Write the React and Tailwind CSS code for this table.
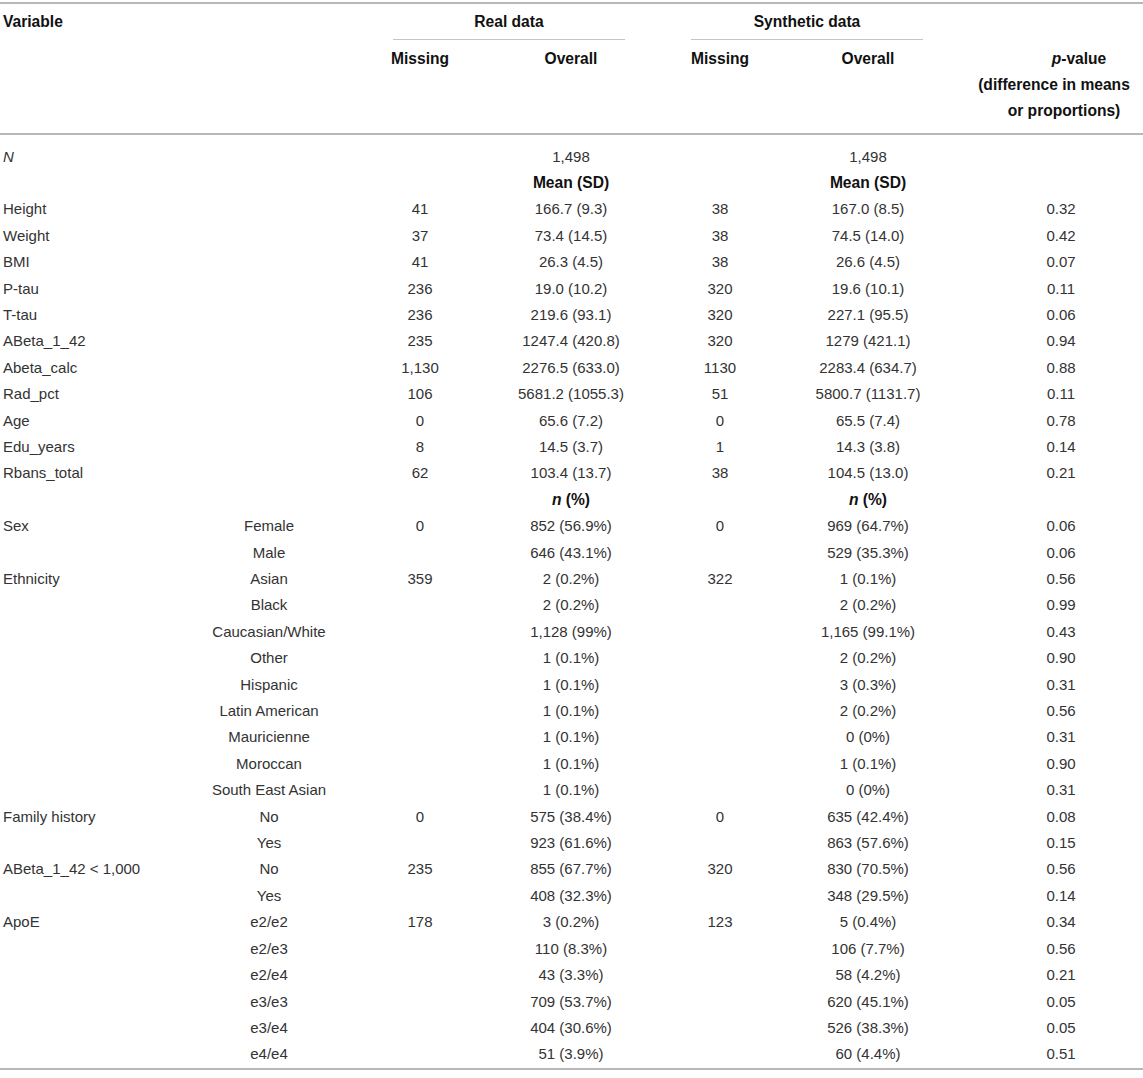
import React from "react";

const G = "grid grid-cols-[196px_146px_156px_146px_152px_144px_39px_164px]";

const rows = [
  { t: "N", italicName: true, ro: "1,498", so: "1,498" },
  { t: "", sub: "", ro: "Mean (SD)", so: "Mean (SD)", bold: true },
  { t: "Height", rm: "41", ro: "166.7 (9.3)", sm: "38", so: "167.0 (8.5)", p: "0.32" },
  { t: "Weight", rm: "37", ro: "73.4 (14.5)", sm: "38", so: "74.5 (14.0)", p: "0.42" },
  { t: "BMI", rm: "41", ro: "26.3 (4.5)", sm: "38", so: "26.6 (4.5)", p: "0.07" },
  { t: "P-tau", rm: "236", ro: "19.0 (10.2)", sm: "320", so: "19.6 (10.1)", p: "0.11" },
  { t: "T-tau", rm: "236", ro: "219.6 (93.1)", sm: "320", so: "227.1 (95.5)", p: "0.06" },
  { t: "ABeta_1_42", rm: "235", ro: "1247.4 (420.8)", sm: "320", so: "1279 (421.1)", p: "0.94" },
  { t: "Abeta_calc", rm: "1,130", ro: "2276.5 (633.0)", sm: "1130", so: "2283.4 (634.7)", p: "0.88" },
  { t: "Rad_pct", rm: "106", ro: "5681.2 (1055.3)", sm: "51", so: "5800.7 (1131.7)", p: "0.11" },
  { t: "Age", rm: "0", ro: "65.6 (7.2)", sm: "0", so: "65.5 (7.4)", p: "0.78" },
  { t: "Edu_years", rm: "8", ro: "14.5 (3.7)", sm: "1", so: "14.3 (3.8)", p: "0.14" },
  { t: "Rbans_total", rm: "62", ro: "103.4 (13.7)", sm: "38", so: "104.5 (13.0)", p: "0.21" },
  { t: "", npct: true },
  { t: "Sex", sub: "Female", rm: "0", ro: "852 (56.9%)", sm: "0", so: "969 (64.7%)", p: "0.06" },
  { t: "", sub: "Male", ro: "646 (43.1%)", so: "529 (35.3%)", p: "0.06" },
  { t: "Ethnicity", sub: "Asian", rm: "359", ro: "2 (0.2%)", sm: "322", so: "1 (0.1%)", p: "0.56" },
  { t: "", sub: "Black", ro: "2 (0.2%)", so: "2 (0.2%)", p: "0.99" },
  { t: "", sub: "Caucasian/White", ro: "1,128 (99%)", so: "1,165 (99.1%)", p: "0.43" },
  { t: "", sub: "Other", ro: "1 (0.1%)", so: "2 (0.2%)", p: "0.90" },
  { t: "", sub: "Hispanic", ro: "1 (0.1%)", so: "3 (0.3%)", p: "0.31" },
  { t: "", sub: "Latin American", ro: "1 (0.1%)", so: "2 (0.2%)", p: "0.56" },
  { t: "", sub: "Mauricienne", ro: "1 (0.1%)", so: "0 (0%)", p: "0.31" },
  { t: "", sub: "Moroccan", ro: "1 (0.1%)", so: "1 (0.1%)", p: "0.90" },
  { t: "", sub: "South East Asian", ro: "1 (0.1%)", so: "0 (0%)", p: "0.31" },
  { t: "Family history", sub: "No", rm: "0", ro: "575 (38.4%)", sm: "0", so: "635 (42.4%)", p: "0.08" },
  { t: "", sub: "Yes", ro: "923 (61.6%)", so: "863 (57.6%)", p: "0.15" },
  { t: "ABeta_1_42 < 1,000", sub: "No", rm: "235", ro: "855 (67.7%)", sm: "320", so: "830 (70.5%)", p: "0.56" },
  { t: "", sub: "Yes", ro: "408 (32.3%)", so: "348 (29.5%)", p: "0.14" },
  { t: "ApoE", sub: "e2/e2", rm: "178", ro: "3 (0.2%)", sm: "123", so: "5 (0.4%)", p: "0.34" },
  { t: "", sub: "e2/e3", ro: "110 (8.3%)", so: "106 (7.7%)", p: "0.56" },
  { t: "", sub: "e2/e4", ro: "43 (3.3%)", so: "58 (4.2%)", p: "0.21" },
  { t: "", sub: "e3/e3", ro: "709 (53.7%)", so: "620 (45.1%)", p: "0.05" },
  { t: "", sub: "e3/e4", ro: "404 (30.6%)", so: "526 (38.3%)", p: "0.05" },
  { t: "", sub: "e4/e4", ro: "51 (3.9%)", so: "60 (4.4%)", p: "0.51" },
];

function Bold({ children }) {
  return <span className="font-bold text-[15.6px] text-[#111]">{children}</span>;
}

function Row({ r }) {
  const val = (v) =>
    r.npct ? (
      <Bold>
        <span className="italic">n</span> (%)
      </Bold>
    ) : r.bold ? (
      <Bold>{v}</Bold>
    ) : (
      v || ""
    );
  return (
    <div className={`${G} h-[26.42px] leading-[26.42px] whitespace-nowrap`}>
      <div className={`pl-[3px] ${r.italicName ? "italic" : ""}`}>{r.t}</div>
      <div className="text-center">{r.sub || ""}</div>
      <div className="text-center">{r.rm || ""}</div>
      <div className="text-center">{val(r.ro)}</div>
      <div className="text-center">{r.sm || ""}</div>
      <div className="text-center">{val(r.so)}</div>
      <div />
      <div className="text-center">{r.p || ""}</div>
    </div>
  );
}

export default function App() {
  return (
    <div className="w-[1143px] min-h-[1078px] bg-white pt-[2px] font-['Liberation_Sans',Arial,Helvetica,sans-serif] text-[15px] text-[#333]">
      <div className="border-t-2 border-b-2 border-[#b8b8b8]">
        <div className={`${G} grid-rows-[36px_auto] font-bold text-[15.6px] text-[#111] leading-[26px] whitespace-nowrap`}>
          <div className="row-span-2 pl-[3px] pt-[5px]">Variable</div>
          <div className="row-span-2" />
          <div className="col-span-2 ml-[51px] mr-[19px] border-b border-[#c4c4c4] pt-[5px] text-center">Real data</div>
          <div className="col-span-2 ml-[47px] mr-[17px] border-b border-[#c4c4c4] pt-[5px] text-center">Synthetic data</div>
          <div className="col-span-2" />
          <div className="pt-[6px] text-center">Missing</div>
          <div className="pt-[6px] text-center">Overall</div>
          <div className="pt-[6px] text-center">Missing</div>
          <div className="pt-[6px] text-center">Overall</div>
          <div className="col-span-2 pt-[6px] pb-[9px]">
            <div className="pl-[75px] text-center">
              <span className="italic">p</span>-value
            </div>
            <div className="pl-[25px] text-center">(difference in means</div>
            <div className="pl-[45px] text-center">or proportions)</div>
          </div>
        </div>
        <div className="border-t-2 border-[#b8b8b8] pt-[8.5px]">
          {rows.map((r, i) => (
            <Row key={i} r={r} />
          ))}
        </div>
      </div>
    </div>
  );
}
